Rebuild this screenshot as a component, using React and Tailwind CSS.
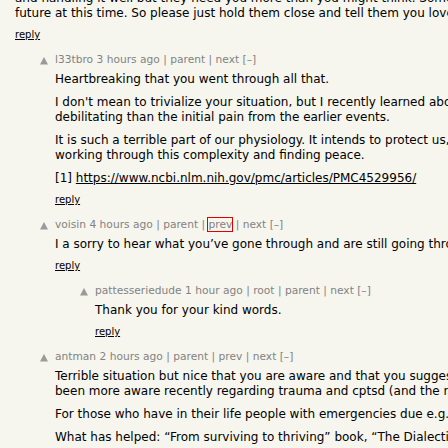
import React from 'react';

const INDENT = { 0: 'w-0', 1: 'w-[40px]', 2: 'w-[80px]' };

const THREAD = [
  {
    level: 0,
    paras: [
      [
        'and handling it well but they need you more than you might think. Some day they will not be around.',
        'future at this time. So please just hold them close and tell them you love them every single day.',
      ],
    ],
  },
  {
    level: 1,
    user: 'l33tbro',
    age: '3 hours ago',
    links: ['parent', 'next'],
    paras: [
      ['Heartbreaking that you went through all that.'],
      [
        "I don't mean to trivialize your situation, but I recently learned about how trauma can be more",
        'debilitating than the initial pain from the earlier events.',
      ],
      [
        'It is such a terrible part of our physiology. It intends to protect us, but it can be a long road',
        'working through this complexity and finding peace.',
      ],
      ['[1] ', { href: 'https://www.ncbi.nlm.nih.gov/pmc/articles/PMC4529956/' }],
    ],
  },
  {
    level: 1,
    user: 'voisin',
    age: '4 hours ago',
    links: ['parent', 'prev*', 'next'],
    paras: [['I a sorry to hear what you’ve gone through and are still going through.']],
  },
  {
    level: 2,
    user: 'pattesseriedude',
    age: '1 hour ago',
    links: ['root', 'parent', 'next'],
    paras: [['Thank you for your kind words.']],
  },
  {
    level: 1,
    user: 'antman',
    age: '2 hours ago',
    links: ['parent', 'prev', 'next'],
    paras: [
      [
        'Terrible situation but nice that you are aware and that you suggest others do the same. I have',
        'been more aware recently regarding trauma and cptsd (and the related conditions) myself.',
      ],
      ['For those who have in their life people with emergencies due e.g. to illness, it is hard.'],
      ['What has helped: “From surviving to thriving” book, “The Dialectical Behavior Therapy” book.'],
    ],
  },
];

const Arrow = () => (
  <svg width="10" height="8" viewBox="0 0 10 8" className="mt-[4px] block">
    <polygon points="4,0 8,7.5 0,7.5" fill="#9a9a9a" />
  </svg>
);

const Meta = ({ user, age, links }) => (
  <div className="text-[10.67px] leading-[13px] text-[#828282] whitespace-nowrap">
    <span>{user}</span> <span>{age}</span>
    {links.map((l) => {
      const hl = l.endsWith('*');
      const name = hl ? l.slice(0, -1) : l;
      return (
        <span key={name}>
          {' | '}
          <span className={hl ? 'outline-1 outline-solid outline-[#e10000]' : ''}>{name}</span>
        </span>
      );
    })}
    {' [–]'}
  </div>
);

const Comment = ({ c, first }) => (
  <div className={`flex ${first ? '-mt-[9px]' : 'mt-[12px]'}`}>
    <div className={`${INDENT[c.level]} shrink-0`} />
    <div className="w-[15px] shrink-0">{c.user && <Arrow />}</div>
    <div className="min-w-0">
      {c.user && <Meta user={c.user} age={c.age} links={c.links} />}
      <div className={`${c.user ? 'mt-[6px]' : ''} flex flex-col gap-[8px] text-[12px] leading-[15px]`}>
        {c.paras.map((p, i) => (
          <div key={i} className="whitespace-nowrap">
            {p.map((line, j) =>
              typeof line === 'string' ? (
                p.length > 1 && !(typeof p[1] === 'object') ? (
                  <div key={j}>{line}</div>
                ) : (
                  <span key={j}>{line}</span>
                )
              ) : (
                <a key={j} className="underline">{line.href}</a>
              )
            )}
          </div>
        ))}
      </div>
      <div className="mt-[8px] text-[10px] leading-[12px]">
        <a className="underline">reply</a>
      </div>
    </div>
  </div>
);

export default function App() {
  return (
    <div className="w-[448px] h-[448px] overflow-hidden bg-[#f6f6ef] text-black font-['DejaVu_Sans',Verdana,sans-serif]">
      {THREAD.map((c, i) => (
        <Comment key={i} c={c} first={i === 0} />
      ))}
    </div>
  );
}
